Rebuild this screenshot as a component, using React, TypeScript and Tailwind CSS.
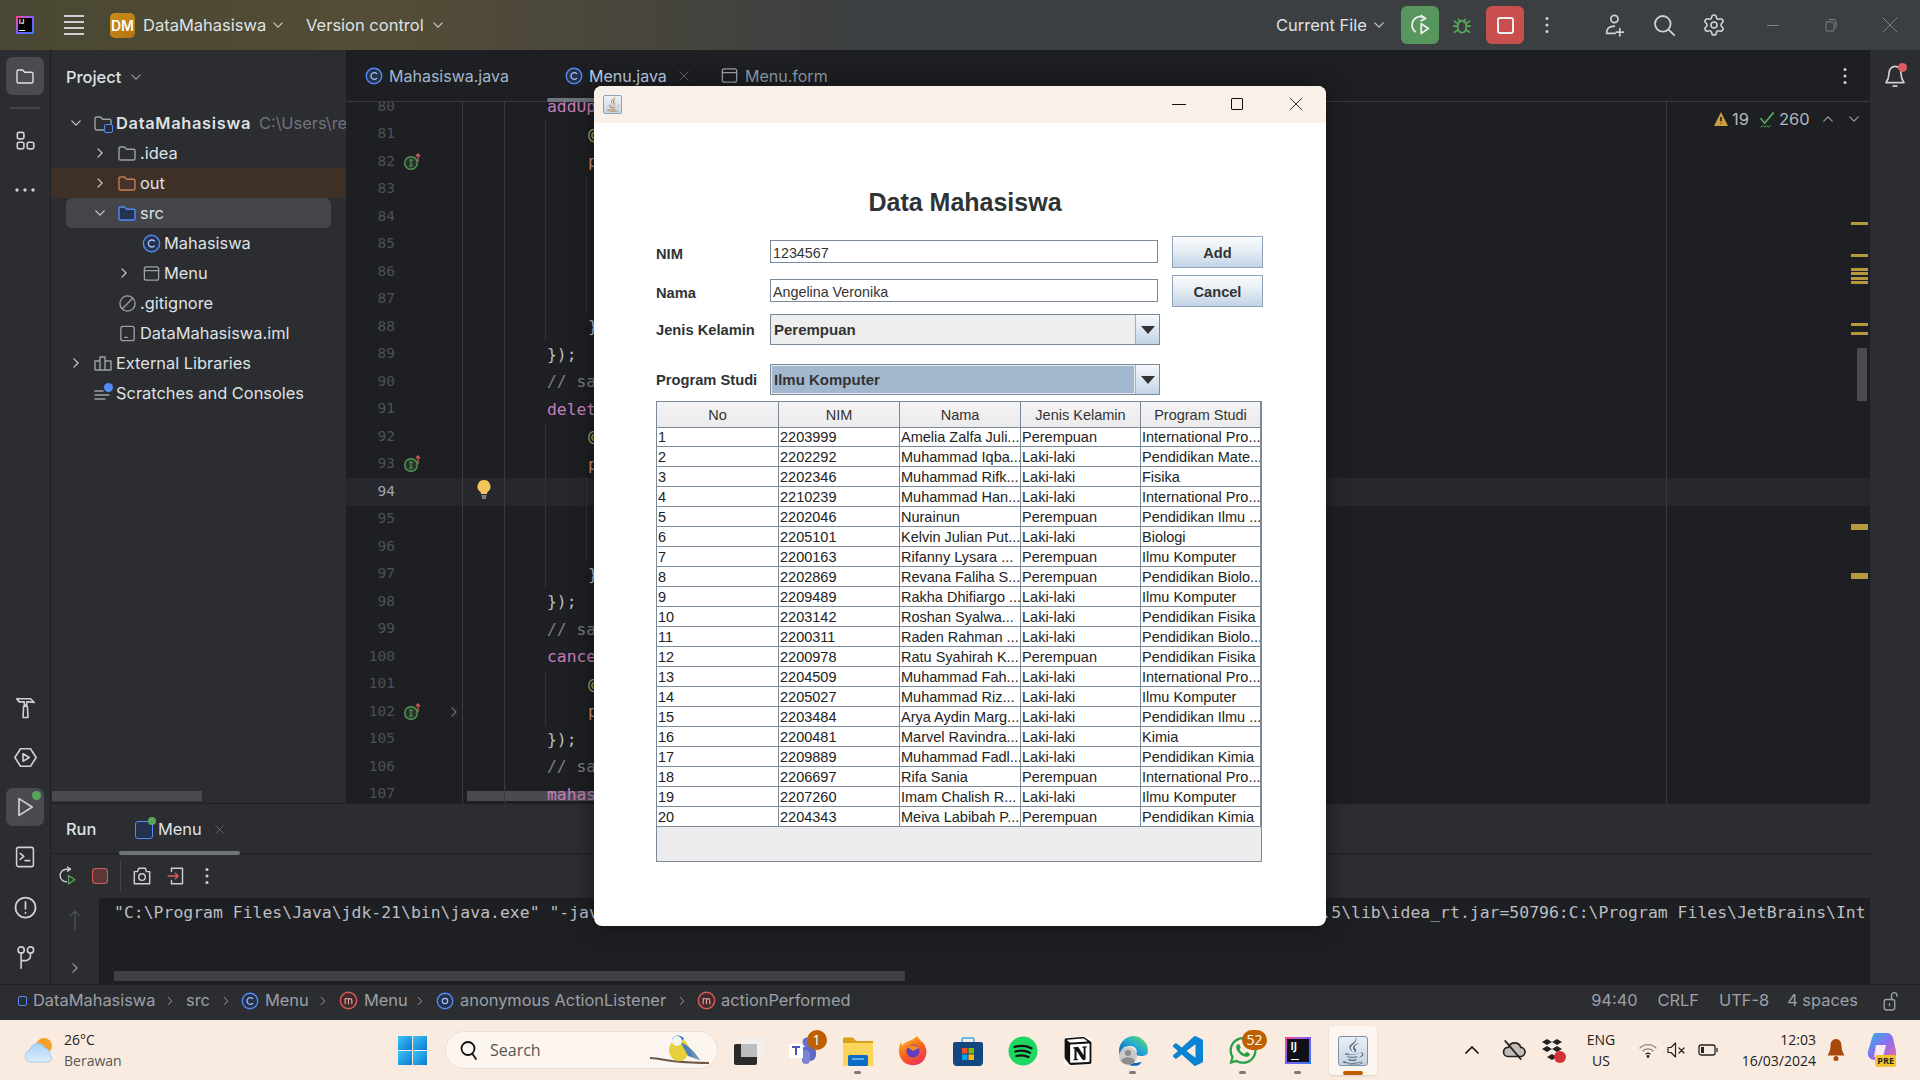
import React from 'react';
import { FaJava, FaWhatsapp } from 'react-icons/fa';
import { SiNotion } from 'react-icons/si';
import { Settings } from 'lucide-react';

const students = [
  ['1', '2203999', 'Amelia Zalfa Juli...', 'Perempuan', 'International Pro...'],
  ['2', '2202292', 'Muhammad Iqba...', 'Laki-laki', 'Pendidikan Mate...'],
  ['3', '2202346', 'Muhammad Rifk...', 'Laki-laki', 'Fisika'],
  ['4', '2210239', 'Muhammad Han...', 'Laki-laki', 'International Pro...'],
  ['5', '2202046', 'Nurainun', 'Perempuan', 'Pendidikan Ilmu ...'],
  ['6', '2205101', 'Kelvin Julian Put...', 'Laki-laki', 'Biologi'],
  ['7', '2200163', 'Rifanny Lysara ...', 'Perempuan', 'Ilmu Komputer'],
  ['8', '2202869', 'Revana Faliha S...', 'Perempuan', 'Pendidikan Biolo...'],
  ['9', '2209489', 'Rakha Dhifiargo ...', 'Laki-laki', 'Ilmu Komputer'],
  ['10', '2203142', 'Roshan Syalwa...', 'Laki-laki', 'Pendidikan Fisika'],
  ['11', '2200311', 'Raden Rahman ...', 'Laki-laki', 'Pendidikan Biolo...'],
  ['12', '2200978', 'Ratu Syahirah K...', 'Perempuan', 'Pendidikan Fisika'],
  ['13', '2204509', 'Muhammad Fah...', 'Laki-laki', 'International Pro...'],
  ['14', '2205027', 'Muhammad Riz...', 'Laki-laki', 'Ilmu Komputer'],
  ['15', '2203484', 'Arya Aydin Marg...', 'Laki-laki', 'Pendidikan Ilmu ...'],
  ['16', '2200481', 'Marvel Ravindra...', 'Laki-laki', 'Kimia'],
  ['17', '2209889', 'Muhammad Fadl...', 'Laki-laki', 'Pendidikan Kimia'],
  ['18', '2206697', 'Rifa Sania', 'Perempuan', 'International Pro...'],
  ['19', '2207260', 'Imam Chalish R...', 'Laki-laki', 'Ilmu Komputer'],
  ['20', '2204343', 'Meiva Labibah P...', 'Perempuan', 'Pendidikan Kimia'],
];

const tableColumns = ['No', 'NIM', 'Nama', 'Jenis Kelamin', 'Program Studi'];

type CodeLine = { n: string; text?: string; color?: string; indent?: number; guides?: number; impl?: boolean; fold?: boolean; bulb?: boolean; current?: boolean };

const PINK = 'text-[#c77dbb]';
const YELLOW = 'text-[#b3ae60]';
const ORANGE = 'text-[#cf8e6d]';
const PLAIN = 'text-[#bcbec4]';
const GRAY = 'text-[#7a7e85]';

const codeLines: CodeLine[] = [
  { n: '80', text: 'addUpdate', color: PINK },
  { n: '81', text: '@Override', color: YELLOW, indent: 1, guides: 1 },
  { n: '82', text: 'public', color: ORANGE, indent: 1, guides: 1, impl: true },
  { n: '83', guides: 2 },
  { n: '84', guides: 2 },
  { n: '85', guides: 2 },
  { n: '86', guides: 2 },
  { n: '87', guides: 2 },
  { n: '88', text: '}', color: PLAIN, indent: 1, guides: 1 },
  { n: '89', text: '});', color: PLAIN },
  { n: '90', text: '// save', color: GRAY },
  { n: '91', text: 'delete', color: PINK },
  { n: '92', text: '@Override', color: YELLOW, indent: 1, guides: 1 },
  { n: '93', text: 'public', color: ORANGE, indent: 1, guides: 1, impl: true },
  { n: '94', guides: 2, bulb: true, current: true },
  { n: '95', guides: 2 },
  { n: '96', guides: 2 },
  { n: '97', text: '}', color: PLAIN, indent: 1, guides: 1 },
  { n: '98', text: '});', color: PLAIN },
  { n: '99', text: '// save', color: GRAY },
  { n: '100', text: 'cancel', color: PINK },
  { n: '101', text: '@Override', color: YELLOW, indent: 1, guides: 1 },
  { n: '102', text: 'public', color: ORANGE, indent: 1, guides: 1, impl: true, fold: true },
  { n: '105', text: '});', color: PLAIN },
  { n: '106', text: '// save', color: GRAY },
  { n: '107', text: 'mahasiswa', color: PINK },
];

const Stroke: React.FC<{ size?: number; className?: string; children: React.ReactNode; sw?: number }> = ({ size = 20, className = '', children, sw = 1.4 }) => (
  <svg width={size} height={size} viewBox="0 0 20 20" fill="none" stroke="currentColor" strokeWidth={sw} strokeLinecap="round" strokeLinejoin="round" className={`shrink-0 ${className}`}>
    {children}
  </svg>
);

const ChevronDown = ({ className = 'text-[#9da0a8]', size = 14 }: { className?: string; size?: number }) => (
  <Stroke size={size} className={className} sw={1.6}><path d="M4 7l6 6 6-6" /></Stroke>
);
const ChevronRight = ({ className = 'text-[#9da0a8]', size = 14 }: { className?: string; size?: number }) => (
  <Stroke size={size} className={className} sw={1.6}><path d="M7 4l6 6-6 6" /></Stroke>
);
const Kebab = ({ className = 'text-[#ced0d6]' }: { className?: string }) => (
  <svg width="20" height="20" viewBox="0 0 20 20" className={`shrink-0 ${className}`} fill="currentColor">
    <circle cx="10" cy="3.5" r="1.5" /><circle cx="10" cy="10" r="1.5" /><circle cx="10" cy="16.5" r="1.5" />
  </svg>
);

const FolderIcon = ({ className = 'text-[#9da0a8]', fill = 'none' }: { className?: string; fill?: string }) => (
  <Stroke size={20} className={className}><path d="M2 5.5A1.5 1.5 0 0 1 3.5 4h4l2.2 2.3h6.8A1.5 1.5 0 0 1 18 7.8v7.7a1.5 1.5 0 0 1-1.5 1.5h-13A1.5 1.5 0 0 1 2 15.5z" fill={fill} /></Stroke>
);

const ClassIcon = ({ size = 19, dot = false }: { size?: number; dot?: boolean }) => (
  <svg width={size} height={size} viewBox="0 0 20 20" fill="none" className="shrink-0">
    <circle cx="10" cy="10" r="8.6" stroke="#548af7" strokeWidth="1.5" fill="#25324d" />
    {dot ? <circle cx="10" cy="10" r="3" stroke="#a8c1f5" strokeWidth="1.3" /> : <path d="M13 7.4A3.7 3.7 0 1 0 13 12.6" stroke="#a8c1f5" strokeWidth="1.4" strokeLinecap="round" />}
  </svg>
);

const MethodIcon = () => (
  <svg width="19" height="19" viewBox="0 0 20 20" fill="none" className="shrink-0">
    <circle cx="10" cy="10" r="8.6" stroke="#db5c5c" strokeWidth="1.5" fill="#3f2a2d" />
    <path d="M6.5 13.5V8M6.5 9c1-1.5 3.4-1.5 3.5.5v4M10 9.5c.3-2 3.5-2 3.5.5v3.5" stroke="#e6a5a5" strokeWidth="1.2" strokeLinecap="round" />
  </svg>
);

const FormIcon = () => (
  <Stroke size={19} className="text-[#9da0a8]"><rect x="2.5" y="3" width="15" height="14" rx="2" /><path d="M2.5 7h15" /></Stroke>
);

const ImplIcon = () => (
  <svg width="20" height="20" viewBox="0 0 20 20" fill="none" className="shrink-0">
    <circle cx="8" cy="11" r="6.3" stroke="#57965c" strokeWidth="1.4" fill="#253627" />
    <path d="M6 8h4M6 14h4M8 8v6" stroke="#57965c" strokeWidth="1.2" />
    <path d="M15 10V2M12.8 4.4L15 2l2.2 2.4" stroke="#db5c5c" strokeWidth="1.2" />
  </svg>
);

const IdeaLogo = () => (
  <div className="w-[18px] h-[18px] shrink-0 p-[2px] bg-gradient-to-br from-[#ff318c] via-[#7c59ff] to-[#087cfa]">
    <div className="w-full h-full bg-black flex flex-col justify-between px-[1px] pt-[1px] pb-[1px] text-white text-[6px] font-bold leading-none">
      <span>IJ</span>
      <span className="block w-[6px] h-[1px] bg-white" />
    </div>
  </div>
);

const TitleBar = () => (
  <div className="h-[50px] shrink-0 flex items-center text-[#dfe1e5] text-[16.5px] bg-gradient-to-r from-[#494733] via-[#544c36] via-20% to-[#3c3f41] to-45%">
    <div className="ml-[16px]"><IdeaLogo /></div>
    <div className="ml-[30px] w-[20px] flex flex-col gap-[4px]">
      <span className="h-[2px] bg-[#ced0d6]" /><span className="h-[2px] bg-[#ced0d6]" /><span className="h-[2px] bg-[#ced0d6]" /><span className="h-[2px] bg-[#ced0d6]" />
    </div>
    <div className="ml-[26px] w-[25px] h-[25px] rounded-[5px] bg-gradient-to-br from-[#c98f1c] to-[#b5740f] text-white text-[14px] font-semibold flex items-center justify-center">DM</div>
    <span className="ml-[8px] w-[128px] whitespace-nowrap">DataMahasiswa</span>
    <ChevronDown className="text-[#ced0d6]" />
    <span className="ml-[21px] w-[125px] whitespace-nowrap">Version control</span>
    <ChevronDown className="text-[#ced0d6]" />
    <div className="ml-auto flex items-center">
      <span className="w-[96px] whitespace-nowrap">Current File</span>
      <ChevronDown className="text-[#ced0d6]" />
      <div className="ml-[15px] w-[38px] h-[38px] rounded-[6px] bg-[#57965c] flex items-center justify-center text-[#eeeeee]">
        <Stroke size={24} sw={1.5}>
          <path d="M14.5 4.5A6.5 6.5 0 1 0 6 15.5" /><path d="M11 2l3.5 2.5L11 6.5" /><path d="M11 9v8l6-4z" />
        </Stroke>
      </div>
      <div className="ml-[11px] w-[24px] flex justify-center text-[#57a65c]">
        <Stroke size={22} sw={1.6}>
          <ellipse cx="10" cy="11.5" rx="4" ry="5.5" /><path d="M7 5l1.5 2M13 5l-1.5 2M2.5 11h3.5M14 11h3.5M3 6.5l3.5 2.5M17 6.5L13.500 9M3 16.500l3.500-2M17 16.500l-3.500-2" />
        </Stroke>
      </div>
      <div className="ml-[12px] w-[38px] h-[38px] rounded-[6px] bg-[#c94f4f] flex items-center justify-center">
        <span className="block w-[17px] h-[17px] rounded-[3px] border-2 border-[#eeeeee]" />
      </div>
      <div className="ml-[13px]"><Kebab /></div>
      <div className="ml-[46px] w-[24px] text-[#ced0d6]">
        <Stroke size={24} sw={1.4}><circle cx="9.500" cy="5" r="3" /><path d="M3 17c0-4 2-6 6.500-6M14 13v6M11 16h6M3 17h7" /></Stroke>
      </div>
      <div className="ml-[25px] w-[24px] text-[#ced0d6]">
        <Stroke size={24} sw={1.5}><circle cx="9" cy="9" r="6.500" /><path d="M14 14l4.500 4.500" /></Stroke>
      </div>
      <div className="ml-[26px] w-[24px] text-[#ced0d6]"><Settings size={24} strokeWidth={1.6} /></div>
      <div className="ml-[37px] w-[20px] flex justify-center"><span className="block w-[12px] h-[1px] bg-[#7f8286]" /></div>
      <div className="ml-[38px] w-[20px] text-[#7f8286]">
        <Stroke size={20} sw={1}><rect x="5" y="7" width="8" height="9" rx="1" /><path d="M8 4.500h5a2 2 0 0 1 2 2V13" /></Stroke>
      </div>
      <div className="ml-[39px] mr-[20px] w-[20px] text-[#7f8286]">
        <Stroke size={20} sw={1}><path d="M3 3l14 14M17 3L3 17" /></Stroke>
      </div>
    </div>
  </div>
);

const StripeButton: React.FC<{ active?: boolean; children: React.ReactNode }> = ({ active, children }) => (
  <div className={`relative w-[38px] h-[38px] rounded-[7px] flex items-center justify-center text-[#ced0d6] ${active ? 'bg-[#494b50]' : ''}`}>{children}</div>
);

const LeftStripe = () => (
  <div className="w-[51px] shrink-0 bg-[#2b2d30] border-r border-[#1e1f22] flex flex-col items-center justify-between pt-[7px] pb-[8px]">
    <div className="flex flex-col items-center">
      <StripeButton active><FolderIcon className="text-[#dfe1e5]" /></StripeButton>
      <span className="block w-[30px] h-[2px] bg-[#43454a] mt-[12px] mb-[12px]" />
      <StripeButton>
        <Stroke size={22} sw={1.5}><rect x="3" y="3" width="6" height="6" rx="1.500" /><rect x="3" y="12" width="6" height="6" rx="1.500" /><rect x="12" y="12" width="6" height="6" rx="1.500" /></Stroke>
      </StripeButton>
      <div className="mt-[12px]"><StripeButton>
        <svg width="22" height="6" viewBox="0 0 22 6" fill="currentColor"><circle cx="3" cy="3" r="1.700" /><circle cx="11" cy="3" r="1.700" /><circle cx="19" cy="3" r="1.700" /></svg>
      </StripeButton></div>
    </div>
    <div className="flex flex-col items-center gap-[12px]">
      <StripeButton><Stroke size={25} sw={1.3}><path d="M3 3h11l3 3-4-.5H11v2.500H9V5.500H5zM8.500 9h3l.5 9H8z" /></Stroke></StripeButton>
      <StripeButton><Stroke size={25} sw={1.3}><path d="M6 3h8l4.500 7-4.500 7H6l-4.500-7z" /><path d="M8 7v6l5-3z" /></Stroke></StripeButton>
      <StripeButton active>
        <Stroke size={24} sw={1.4}><path d="M5 3v14l11-7z" /></Stroke>
        <span className="absolute top-[3px] right-[3px] w-[9px] h-[9px] rounded-full bg-[#57a65c]" />
      </StripeButton>
      <StripeButton><Stroke size={24} sw={1.300}><rect x="3" y="2" width="14" height="16" rx="1.500" /><path d="M6 7l3 2.500L6 12M10 13h4" /></Stroke></StripeButton>
      <StripeButton><Stroke size={25} sw={1.400}><circle cx="10" cy="10" r="8" /><path d="M10 5.500v5.500M10 14v.4" /></Stroke></StripeButton>
      <StripeButton><Stroke size={25} sw={1.300}><circle cx="6.500" cy="4" r="2.500" /><circle cx="14" cy="4" r="2.500" /><path d="M6.500 6.500v12M14 6.500v2a4 4 0 0 1-4 4H6.500" /></Stroke></StripeButton>
    </div>
  </div>
);

const padByLevel = ['pl-[18px]', 'pl-[42px]', 'pl-[66px]'];

const TreeRow: React.FC<{ level: number; chevron?: 'right' | 'down'; icon: React.ReactNode; label: string; hint?: string; bold?: boolean; className?: string }> = ({ level, chevron, icon, label, hint, bold, className }) => (
  <div className={`h-[30px] flex items-center text-[16.4px] text-[#dfe1e5] whitespace-nowrap overflow-hidden ${className ?? padByLevel[level]}`}>
    <span className="w-[14px] shrink-0">
      {chevron === 'right' && <ChevronRight className="text-[#ced0d6]" />}
      {chevron === 'down' && <ChevronDown className="text-[#ced0d6]" />}
    </span>
    <span className="ml-[10px] w-[20px] shrink-0 flex justify-center">{icon}</span>
    <span className={`ml-[3px] ${bold ? 'font-semibold tracking-[0.7px]' : ''}`}>{label}</span>
    {hint && <span className="ml-[8px] text-[#6f737a]">{hint}</span>}
  </div>
);

const ProjectPanel = () => (
  <div className="w-[295px] shrink-0 bg-[#2b2d30] flex flex-col">
    <div className="h-[54px] shrink-0 flex items-center gap-[8px] pl-[15px] text-[16.4px] font-medium text-[#dfe1e5]">
      Project <ChevronDown />
    </div>
    <div className="mt-[4px] flex-1">
      <TreeRow level={0} chevron="down" bold label="DataMahasiswa" hint="C:\Users\reza\IdeaProjects" icon={
        <span className="relative block w-[20px] h-[20px]">
          <FolderIcon className="text-[#9da0a8]" />
          <span className="absolute right-0 bottom-0 w-[9px] h-[9px] rounded-[2px] border-[1.500px] border-[#548af7] bg-[#2b2d30]" />
        </span>
      } />
      <TreeRow level={1} chevron="right" label=".idea" icon={<FolderIcon />} />
      <TreeRow level={1} chevron="right" label="out" className="pl-[42px] bg-[#3f3027]" icon={<FolderIcon className="text-[#c77d55]" fill="#45322b" />} />
      <TreeRow level={1} chevron="down" label="src" className="ml-[15px] mr-[15px] pl-[27px] rounded-md bg-[#43454a]" icon={<FolderIcon className="text-[#548af7]" fill="#25324d" />} />
      <TreeRow level={2} label="Mahasiswa" icon={<ClassIcon />} />
      <TreeRow level={2} chevron="right" label="Menu" icon={<FormIcon />} />
      <TreeRow level={1} label=".gitignore" icon={<Stroke size={19} className="text-[#9da0a8]"><circle cx="10" cy="10" r="8" /><path d="M4.500 15.500l11-11" /></Stroke>} />
      <TreeRow level={1} label="DataMahasiswa.iml" icon={<Stroke size={19} className="text-[#9da0a8]"><rect x="3" y="2.500" width="14" height="15" rx="2" /><path d="M7 14h3" /></Stroke>} />
      <TreeRow level={0} chevron="right" label="External Libraries" icon={<Stroke size={20} className="text-[#9da0a8]"><path d="M2 17V8h5v9zM7 17V4h5v13zM12 17V8h6v9z" /></Stroke>} />
      <TreeRow level={0} label="Scratches and Consoles" icon={
        <span className="relative block w-[20px] h-[20px]">
          <Stroke size={20} className="text-[#9da0a8]"><path d="M2 8h8M2 12h14M2 16h10" /></Stroke>
          <span className="absolute right-0 top-0 w-[9px] h-[9px] rounded-full bg-[#548af7]" />
        </span>
      } />
    </div>
    <div className="ml-[1px] mb-[2px] w-[150px] h-[10px] shrink-0 bg-[#4a4b4e]" />
  </div>
);

const CodeRow: React.FC<{ line: CodeLine }> = ({ line }) => {
  const { n, text, color, indent = 0, guides = 0, impl, fold, bulb, current } = line;
  return (
    <div className={`h-[27.5px] shrink-0 flex items-stretch font-['DejaVu_Sans_Mono',monospace] ${current ? 'bg-[#26282e]' : ''}`}>
      <div className="w-[117px] shrink-0 flex items-center border-r border-[#393b40]">
        <span className={`w-[49px] text-right text-[14.5px] ${current ? 'text-[#a1a3ab]' : 'text-[#4b5059]'}`}>{n}</span>
        <span className="ml-[8px] w-[20px]">{impl && <ImplIcon />}</span>
        <span className="ml-[24px] w-[14px]">{fold && <ChevronRight className="text-[#6f737a]" />}</span>
      </div>
      <div className="w-[42px] shrink-0 flex items-center justify-center border-r border-[#393b40]">
        {bulb && (
          <svg width="16" height="22" viewBox="0 0 16 22" className="-mt-[3px]">
            <path d="M8 1a6.500 6.500 0 0 0-4 11.600c.8.700 1 1.500 1 2.400h6c0-.9.200-1.700 1-2.400A6.500 6.500 0 0 0 8 1z" fill="#f2c55c" />
            <path d="M5.500 17h5M6 19h4" stroke="#ced0d6" strokeWidth="1.200" />
          </svg>
        )}
      </div>
      <div className="w-[1162px] shrink-0 flex border-r border-[#393b40] text-[16.35px] leading-[27.5px] whitespace-nowrap">
        <span className="w-[40px] shrink-0" />
        <div className={`w-[41px] shrink-0 pl-[1px] border-l ${guides > 0 ? 'border-[#313438]' : 'border-transparent'} ${color ?? ''}`}>{indent === 0 && text}</div>
        <div className={`w-[41px] shrink-0 pl-[1px] border-l ${guides > 1 ? 'border-[#313438]' : 'border-transparent'} ${color ?? ''}`}>{indent === 1 && text}</div>
      </div>
    </div>
  );
};

const scrollMarks = ['top-[120px] h-[3px]', 'top-[152px] h-[3px]', 'top-[166px] h-[3px]', 'top-[170px] h-[3px]', 'top-[175px] h-[3px]', 'top-[179px] h-[3px]', 'top-[221px] h-[3px]', 'top-[230px] h-[3px]', 'top-[422px] h-[6px]', 'top-[471px] h-[6px]'];

const Editor = () => (
  <div className="relative flex-1 min-w-0 bg-[#1e1f22] flex flex-col overflow-hidden">
    <div className="relative h-[52px] shrink-0 border-b border-[#393b40] flex items-center pl-[19px] text-[16px] z-10 bg-[#1e1f22]">
      <ClassIcon size={18} />
      <span className="ml-[6px] w-[176px] text-[#a0b6cc] whitespace-nowrap">Mahasiswa.java</span>
      <ClassIcon size={18} />
      <span className="ml-[6px] w-[89px] text-[#bcd4ea] whitespace-nowrap">Menu.java</span>
      <Stroke size={12} className="text-[#6f737a]"><path d="M3 3l14 14M17 3L3 17" /></Stroke>
      <span className="ml-[30px]"><FormIcon /></span>
      <span className="ml-[6px] text-[#8fa0ae] whitespace-nowrap">Menu.form</span>
      <span className="ml-auto mr-[15px]"><Kebab /></span>
      <span className="absolute left-[201px] -bottom-[1px] w-[150px] h-[4px] rounded-full bg-[#6f737a]" />
    </div>
    <div className="relative flex-1 min-h-0 overflow-hidden">
      <div className="absolute left-[121px] bottom-[2px] w-[300px] h-[10px] bg-[#4a4b4e]" />
      <div className="relative flex flex-col -mt-[9px]">
        {codeLines.map(line => <CodeRow key={line.n} line={line} />)}
      </div>
      <div className="absolute left-[1367px] top-[5px] w-[155px] flex items-center text-[16.5px] text-[#b4b8bf]">
        <svg width="16" height="16" viewBox="0 0 16 16"><path d="M8 1l7 14H1z" fill="#cb9d3c" /><path d="M8 6v4.500M8 12.200v.6" stroke="#1e1f22" strokeWidth="1.600" /></svg>
        <span className="ml-[3px] w-[24px]">19</span>
        <span className="ml-[2px] w-[21px] text-[#57a65c]"><Stroke size={19} sw={1.800}><path d="M3 9l4 5 9-11" /><path d="M3 18l2-1.500 2 1.500 2-1.500 2 1.500 2-1.500" strokeWidth="1" /></Stroke></span>
        <span className="w-[34px]">260</span>
        <span className="ml-[8px] rotate-180"><ChevronDown /></span>
        <span className="ml-[12px]"><ChevronDown /></span>
      </div>
      {scrollMarks.map(mark => <span key={mark} className={`absolute left-[1505px] w-[17px] bg-[#b8983f] ${mark}`} />)}
      <span className="absolute left-[1511px] top-[246px] w-[10px] h-[53px] bg-[#4a4b4e]" />
    </div>
  </div>
);

const RunPanel = () => (
  <div className="h-[181px] shrink-0 bg-[#2b2d30] border-t border-[#1e1f22] flex flex-col">
    <div className="relative h-[50px] shrink-0 border-b border-[#1e1f22] flex items-center pt-[2px] text-[16.4px] text-[#dfe1e5]">
      <span className="ml-[15px] w-[69px] font-medium">Run</span>
      <span className="relative w-[18px] h-[18px] rounded-[3px] border-[1.500px] border-[#548af7] bg-[#25324d]">
        <span className="absolute -top-[5px] -right-[4px] w-[8px] h-[8px] rounded-full bg-[#57a65c]" />
      </span>
      <span className="ml-[5px] w-[56px]">Menu</span>
      <Stroke size={11} className="text-[#6f737a]"><path d="M3 3l14 14M17 3L3 17" /></Stroke>
      <span className="absolute left-[68px] -bottom-[2px] w-[121px] h-[4px] rounded-full bg-[#6f737a]" />
    </div>
    <div className="h-[44px] shrink-0 flex items-center pl-[6px] pb-[1px] text-[#ced0d6]">
      <Stroke size={21} sw={1.300}><path d="M9 16A6 6 0 0 1 9 4h3" /><path d="M10 2l3 2-3 2" /><path d="M11 10v8l6-4z" stroke="#57a65c" /></Stroke>
      <span className="ml-[14px] w-[16px] h-[16px] rounded-[3px] border border-[#db5c5c] bg-[#5e3838]" />
      <span className="ml-[12px] w-[1px] h-[30px] bg-[#43454a]" />
      <span className="ml-[10px]"><Stroke size={22} sw={1.300}><path d="M3 6h3l1-3h6l1 3h3v11H3z" /><circle cx="10" cy="11" r="3" /></Stroke></span>
      <span className="ml-[13px]"><Stroke size={22} sw={1.300}><path d="M5 6V3h10v14H5v-3" /><path d="M2 10h9M8.500 7.500L11 10l-2.500 2.500" stroke="#db5c5c" /></Stroke></span>
      <span className="ml-[9px]"><Kebab /></span>
    </div>
    <div className="flex-1 min-h-0 flex">
      <div className="w-[48px] shrink-0 flex flex-col items-center justify-between pt-[11px] pb-[9px] text-[#4e5157]">
        <Stroke size={22} sw={1.200}><path d="M10 19V2M5.500 6.500L10 2l4.500 4.500" /></Stroke>
        <ChevronRight className="text-[#9da0a8]" size={14} />
      </div>
      <div className="flex-1 min-w-0 bg-[#1e1f22] pl-[15px] flex flex-col overflow-hidden">
        <div className="mt-[1px] h-[27px] leading-[27px] text-[16.44px] text-[#bcbec4] whitespace-pre overflow-hidden font-['DejaVu_Sans_Mono',monospace]">
          {'"C:\\Program Files\\Java\\jdk-21\\bin\\java.exe" "-javaagent:C:\\Program Files\\JetBrains\\IntelliJ IDEA Community Edition  2023.3.5\\lib\\idea_rt.jar=50796:C:\\Program Files\\JetBrains\\Int'}
        </div>
        <div className="mt-auto mb-[3px] w-[791px] h-[10px] shrink-0 bg-[#3f4042]" />
      </div>
    </div>
  </div>
);

const StatusBar = () => (
  <div className="h-[36px] shrink-0 bg-[#2b2d30] border-t border-[#1e1f22] flex items-center pb-[4px] text-[16.4px] text-[#9da0a8] whitespace-nowrap">
    <span className="ml-[18px] w-[9px] h-[10px] rounded-[2px] border-[1.500px] border-[#548af7]" />
    <span className="ml-[6px] w-[131px]">DataMahasiswa</span>
    <ChevronRight size={12} />
    <span className="ml-[10px] w-[34px]">src</span>
    <ChevronRight size={12} />
    <span className="ml-[9px]"><ClassIcon size={18} /></span>
    <span className="ml-[6px] w-[52px]">Menu</span>
    <ChevronRight size={12} />
    <span className="ml-[10px]"><MethodIcon /></span>
    <span className="ml-[6px] w-[50px]">Menu</span>
    <ChevronRight size={12} />
    <span className="ml-[10px]"><ClassIcon size={18} dot /></span>
    <span className="ml-[6px] w-[216px]">anonymous ActionListener</span>
    <ChevronRight size={12} />
    <span className="ml-[9px]"><MethodIcon /></span>
    <span className="ml-[5px]">actionPerformed</span>
    <span className="ml-auto">94:40</span>
    <span className="ml-[20px]">CRLF</span>
    <span className="ml-[20px]">UTF-8</span>
    <span className="ml-[18px]">4 spaces</span>
    <span className="ml-[22px] mr-[19px]">
      <Stroke size={21} sw={1.300}><rect x="4" y="9" width="10" height="10" rx="2" /><path d="M11 9V5a2.500 2.500 0 0 1 5 0v1M9 13v2" /></Stroke>
    </span>
  </div>
);

const WeatherIcon = () => (
  <svg width="32" height="30" viewBox="0 0 32 30">
    <defs><linearGradient id="cloudFill" x1="0" y1="0" x2="0" y2="1"><stop offset="0" stopColor="#a7d2f7" /><stop offset="1" stopColor="#dfeefb" /></linearGradient></defs>
    <circle cx="20" cy="11" r="8" fill="#f7a12a" />
    <path d="M7 27a6 6 0 0 1-1-11.900A8 8 0 0 1 21 13a6 6 0 0 1 5 7 4 4 0 0 1-1 7z" fill="url(#cloudFill)" stroke="#8fc2ef" strokeWidth="0.800" />
  </svg>
);

const TaskIcons: Record<string, React.ReactNode> = {
  taskView: (
    <svg width="30" height="30" viewBox="0 0 30 30">
      <rect x="8" y="1" width="22" height="20" rx="2" fill="#f2f0ee" />
      <rect x="1" y="8" width="23" height="21" rx="2" fill="#2a2a2a" />
      <rect x="8" y="8" width="16" height="13" fill="#bdbdbd" />
    </svg>
  ),
  teams: (
    <svg width="30" height="30" viewBox="0 0 30 30">
      <circle cx="19" cy="6" r="4.500" fill="#6670c9" /><rect x="13" y="10" width="15" height="15" rx="6" fill="#5f69c4" />
      <rect x="14" y="14" width="8" height="14" rx="4" fill="#7b83d6" />
      <rect x="1" y="8" width="14" height="14" fill="#ffffff" /><path d="M4 11h8M8 11v8" stroke="#4b53bc" strokeWidth="2" />
    </svg>
  ),
  files: (
    <svg width="30" height="30" viewBox="0 0 30 30">
      <path d="M0 3a1.500 1.500 0 0 1 1.500-1.500H10L13 5H30v25H0z" fill="#d99f16" />
      <path d="M0 7h30v23H0z" fill="#fcd45c" />
      <rect x="5" y="19" width="20" height="11" rx="1.500" fill="#0d6cc4" /><path d="M9 23h12" stroke="#7cc0f2" strokeWidth="1.500" />
    </svg>
  ),
  firefox: (
    <svg width="30" height="30" viewBox="0 0 30 30">
      <defs><linearGradient id="foxFill" x1="0.200" y1="0" x2="0.800" y2="1"><stop offset="0" stopColor="#fdbb1b" /><stop offset="0.500" stopColor="#f6631f" /><stop offset="1" stopColor="#ec2f5d" /></linearGradient></defs>
      <path d="M19 0c1 3 5 5 7 8 4 6 3 14-2 18-6 5-16 4-20-2C0 19 0 11 3 6l1 4c2-3 4-4 7-5 3-1 6-3 8-5z" fill="url(#foxFill)" />
      <circle cx="15" cy="15" r="6.500" fill="#5f3fbf" /><path d="M9 11c3-2 8-3 12 1l-6 3z" fill="#f68a1f" />
    </svg>
  ),
  store: (
    <svg width="30" height="30" viewBox="0 0 30 30">
      <path d="M9 7V3.500A1.500 1.500 0 0 1 10.500 2h9A1.500 1.500 0 0 1 21 3.500V7" fill="none" stroke="#37a8e8" strokeWidth="1.500" />
      <path d="M0 8a2 2 0 0 1 2-2h26a2 2 0 0 1 2 2v18a4 4 0 0 1-4 4H4a4 4 0 0 1-4-4z" fill="#14477f" />
      <rect x="9" y="12" width="5.500" height="5.500" fill="#f25022" /><rect x="15.500" y="12" width="5.500" height="5.500" fill="#7fba00" />
      <rect x="9" y="18.500" width="5.500" height="5.500" fill="#00a4ef" /><rect x="15.500" y="18.500" width="5.500" height="5.500" fill="#ffb900" />
    </svg>
  ),
  spotify: (
    <svg width="30" height="30" viewBox="0 0 30 30">
      <circle cx="15" cy="15" r="14.500" fill="#1ed760" />
      <path d="M6.500 11c6-1.800 12-1.300 17 1.200M7.500 15.500c5-1.400 10-1 14.500 1.200M8.500 20c4.200-1.100 8.500-.8 12 1" fill="none" stroke="#141414" strokeWidth="2.300" strokeLinecap="round" />
    </svg>
  ),
  notion: <span className="block w-[28px] h-[28px] rounded-[4px] bg-white"><SiNotion size={28} color="#111111" /></span>,
  edge: (
    <svg width="30" height="30" viewBox="0 0 30 30">
      <defs><linearGradient id="edgeFill" x1="0.900" y1="0.100" x2="0.100" y2="0.900"><stop offset="0" stopColor="#54d96f" /><stop offset="0.500" stopColor="#22a7d8" /><stop offset="1" stopColor="#0c5fa8" /></linearGradient></defs>
      <path d="M15 0a15 15 0 0 1 15 15c0 4-3 5-7 5-3 0-5-1-5-2 2-3 0-8-6-8-5 0-9 3-11 5A15 15 0 0 1 15 0z" fill="url(#edgeFill)" />
      <path d="M1 15a15 15 0 0 0 20 14l3-3-6 1C10 27 6 20 9 12 5 12 2 13 1 15z" fill="#0c65b8" />
      <circle cx="10" cy="20" r="9" fill="#c9c9c9" /><circle cx="10" cy="17" r="3" fill="#8c8c8c" /><path d="M3 25c2-5 12-5 14 0a9 9 0 0 1-14 0z" fill="#8c8c8c" />
    </svg>
  ),
  vscode: (
    <svg width="30" height="30" viewBox="0 0 24 24"><path fill="#0a84d0" d="M23.150 2.587L18.210.210a1.494 1.494 0 0 0-1.705.290l-9.460 8.630-4.120-3.128a.999.999 0 0 0-1.276.057L.327 7.261A1 1 0 0 0 .326 8.740L3.899 12 .326 15.260a1 1 0 0 0 .001 1.479L1.650 17.940a.999.999 0 0 0 1.276.057l4.120-3.128 9.460 8.630a1.492 1.492 0 0 0 1.704.290l4.942-2.377A1.500 1.500 0 0 0 24 20.060V3.939a1.500 1.500 0 0 0-.850-1.352zm-5.146 14.861L10.826 12l7.178-5.448v10.896z" /></svg>
  ),
  whatsapp: <FaWhatsapp size={31} color="#27a047" />,
  idea: (
    <div className="w-[26px] h-[27px] p-[2px] bg-gradient-to-br from-[#ff318c] via-[#7c59ff] to-[#087cfa]">
      <div className="w-full h-full bg-[#10101a] flex flex-col justify-between pl-[4px] py-[2px] text-white text-[10px] font-bold leading-none">
        <span>IJ</span>
        <span className="block w-[8px] h-[1.500px] bg-white" />
      </div>
    </div>
  ),
  java: (
    <span className="block w-[30px] h-[30px] rounded-[3px] border border-[#7c90a8] bg-gradient-to-b from-[#e9eff6] to-[#c6d3e2] flex items-center justify-center">
      <FaJava size={28} color="#50657c" />
    </span>
  ),
};

const TaskSlot: React.FC<{ icon: string; badge?: string; running?: boolean; active?: boolean }> = ({ icon, badge, running, active }) => (
  <div className="w-[55px] h-[60px] shrink-0 flex items-center justify-center">
    <div className={`w-[48px] h-[49px] rounded-[4px] flex flex-col items-center pt-[10px] ${active ? 'bg-[#fdf6f0] shadow-sm' : ''}`}>
      <div className="relative w-[30px] h-[30px] flex items-center justify-center">
        {TaskIcons[icon]}
        {badge && <span className="absolute -top-[6px] -right-[9px] min-w-[20px] h-[20px] px-[4px] rounded-full bg-[#bf6000] text-white text-[14px] flex items-center justify-center font-['Open_Sans',sans-serif]">{badge}</span>}
      </div>
      {running && <span className="mt-[5px] w-[7px] h-[3px] rounded-full bg-[#7d7a78]" />}
      {active && <span className="mt-[5px] w-[20px] h-[4px] rounded-full bg-[#c25e00]" />}
    </div>
  </div>
);

const BirdIcon = () => (
  <svg width="60" height="38" viewBox="0 0 60 38">
    <path d="M0 27c8 0 14 2 22 3 10 1 24 2 37 2" stroke="#6d5a4a" strokeWidth="2" fill="none" />
    <ellipse cx="29" cy="19" rx="10" ry="11" fill="#e6cf3a" />
    <path d="M22 8a7 7 0 0 1 12 0l-4 3z" fill="#2c74bf" />
    <circle cx="27" cy="10" r="5" fill="#f3f3f0" />
    <path d="M31 12c6 1 12 7 19 17l-12-4z" fill="#4a83b8" />
    <path d="M40 18l10 11-6-2z" fill="#7a96a8" />
  </svg>
);

const Taskbar = () => (
  <div className="h-[60px] shrink-0 bg-[#f9ebe0] flex items-center font-['Open_Sans',sans-serif] text-[#222222]">
    <div className="ml-[24px]"><WeatherIcon /></div>
    <div className="ml-[8px] w-[334px] flex flex-col text-[14px] leading-[21px]">
      <span>26°C</span>
      <span className="text-[#555555]">Berawan</span>
    </div>
    <svg width="29" height="29" viewBox="0 0 29 29">
      <defs><linearGradient id="winFill" x1="0" y1="0" x2="1" y2="1"><stop offset="0" stopColor="#3cc5f5" /><stop offset="1" stopColor="#0b78d1" /></linearGradient></defs>
      <rect width="14" height="14" fill="url(#winFill)" /><rect x="15" width="14" height="14" fill="url(#winFill)" /><rect y="15" width="14" height="14" fill="url(#winFill)" /><rect x="15" y="15" width="14" height="14" fill="url(#winFill)" />
    </svg>
    <div className="ml-[18px] w-[273px] h-[38px] rounded-full bg-[#fdf5ef] border border-[#eadfd6] flex items-center pl-[13px] text-[16px] text-[#555555] overflow-hidden">
      <Stroke size={20} className="text-[#111111]" sw={1.800}><circle cx="9" cy="8.500" r="6.500" /><path d="M13.500 14l3.500 5" /></Stroke>
      <span className="ml-[11px]">Search</span>
      <span className="ml-auto mr-[7px]"><BirdIcon /></span>
    </div>
    <div className="ml-[2px] flex">
      <TaskSlot icon="taskView" />
      <TaskSlot icon="teams" badge="1" />
      <TaskSlot icon="files" running />
      <TaskSlot icon="firefox" />
      <TaskSlot icon="store" />
      <TaskSlot icon="spotify" />
      <TaskSlot icon="notion" />
      <TaskSlot icon="edge" running />
      <TaskSlot icon="vscode" />
      <TaskSlot icon="whatsapp" badge="52" running />
      <TaskSlot icon="idea" running />
      <TaskSlot icon="java" active />
    </div>
    <div className="ml-auto flex items-center">
      <span className="w-[20px] text-[#111111]"><Stroke size={20} sw={1.700}><path d="M4 13l6-6 6 6" /></Stroke></span>
      <span className="ml-[18px] w-[26px] text-[#222222]"><Stroke size={26} sw={1.300}><path d="M6 15a3.500 3.500 0 0 1 .5-7 5 5 0 0 1 9.500 0 3.500 3.500 0 0 1-.5 7z" fill="#c4bcb6" /><path d="M4 3l12 14" /></Stroke></span>
      <span className="relative ml-[14px] w-[26px] h-[26px]">
        <svg width="26" height="26" viewBox="0 0 26 26" fill="#222222"><path d="M7 2l5 3-5 3-5-3zM17 2l5 3-5 3-5-3zM7 9l5 3-5 3-5-3zM17 9l5 3-5 3-5-3zM12 17l5 3-5 3-5-3z" /></svg>
        <span className="absolute right-0 bottom-0 w-[12px] h-[12px] rounded-full bg-[#d13438]" />
      </span>
      <div className="ml-[14px] w-[42px] flex flex-col items-center text-[14px] leading-[21px]"><span>ENG</span><span>US</span></div>
      <span className="ml-[16px] w-[20px] text-[#888888]"><Stroke size={20} sw={1.200}><path d="M2 8a11 11 0 0 1 16 0M5 11a7 7 0 0 1 10 0" /><path d="M8 14a3 3 0 0 1 4 0" stroke="#222222" /><circle cx="10" cy="16.500" r="0.800" fill="#222222" stroke="#222222" /></Stroke></span>
      <span className="ml-[8px] w-[20px] text-[#222222]"><Stroke size={20} sw={1.200}><path d="M2 7.500h3L9.500 3v14L5 12.500H2zM13 8l5 5M18 8l-5 5" /></Stroke></span>
      <span className="ml-[12px] w-[20px] text-[#222222]"><Stroke size={20} sw={1.300}><rect x="1" y="5" width="16" height="10" rx="2" /><path d="M19 8.500v3" /><rect x="3" y="7" width="3" height="6" fill="#222222" stroke="none" /></Stroke></span>
      <div className="ml-[16px] w-[82px] flex flex-col items-end text-[14px] leading-[21px]"><span>12:03</span><span>16/03/2024</span></div>
      <svg className="ml-[10px]" width="20" height="24" viewBox="0 0 20 24" fill="#a8480c"><path d="M10 1c3.500 0 5.500 3 5.500 7 0 4 1.500 7 3 9.500H1.500C3 15 4.500 12 4.500 8c0-4 2-7 5.500-7z" /><circle cx="10" cy="20.500" r="2.500" /></svg>
      <span className="relative ml-[20px] mr-[24px] w-[30px] h-[34px]">
        <svg width="30" height="30" viewBox="0 0 30 30">
          <defs><linearGradient id="copilotFill" x1="0" y1="0" x2="1" y2="1"><stop offset="0" stopColor="#29b5e8" /><stop offset="0.500" stopColor="#8c6df0" /><stop offset="1" stopColor="#f06aa8" /></linearGradient></defs>
          <path d="M9 0h12c3 0 5 2 6 5l3 13c1 5-2 9-6 9H9c-5 0-8-4-7-9L6 5c1-3 2-5 3-5z" fill="url(#copilotFill)" />
          <path d="M10 12h10l-3 12H8z" fill="#f7e9f2" />
        </svg>
        <span className="absolute right-0 bottom-0 h-[12px] px-[2px] bg-[#f4c430] text-[#222222] text-[9px] font-bold leading-[12px] rounded-[2px]">PRE</span>
      </span>
    </div>
  </div>
);

const SwingInput: React.FC<{ value: string }> = ({ value }) => (
  <div className="mt-[4px] w-[388px] h-[23px] shrink-0 bg-white border border-[#7a8a99] pl-[2px] leading-[25px] text-[14.3px] text-[#333333]">{value}</div>
);

const SwingButton: React.FC<{ label: string }> = ({ label }) => (
  <div className="ml-[14px] w-[91px] h-[32px] shrink-0 border border-[#8fa4bb] bg-gradient-to-b from-[#fbfcfd] via-[#e3ebf3] to-[#c2d3e6] flex items-center justify-center pt-[3px] font-bold text-[14.6px] text-[#333333]">{label}</div>
);

const SwingCombo: React.FC<{ value: string; focused?: boolean }> = ({ value, focused }) => (
  <div className="w-[390px] h-[31px] shrink-0 flex border border-[#7a8a99]">
    <div className={`flex-1 flex items-center pl-[2px] pt-[2px] border border-[#e6ebf2] font-bold text-[15px] text-[#333333] ${focused ? 'bg-[#a3b7ce]' : 'bg-[#eeeeee]'}`}>{value}</div>
    <div className="w-[24px] border-l border-[#9fb1c4] bg-gradient-to-b from-[#f6f8fb] to-[#c3d4e6] flex items-center justify-center">
      <span className="block w-0 h-0 border-l-[7px] border-r-[7px] border-t-[8px] border-l-transparent border-r-transparent border-t-[#333333]" />
    </div>
  </div>
);

const FormLabel: React.FC<{ tall?: boolean; children: React.ReactNode }> = ({ tall, children }) => (
  <div className={`w-[114px] shrink-0 font-bold text-[14.7px] text-[#2e3336] whitespace-nowrap ${tall ? 'leading-[36px]' : 'leading-[33px]'}`}>{children}</div>
);

const DialogWindow = () => (
  <div className="absolute z-20 left-[594px] top-[86px] w-[732px] h-[840px] rounded-[8px] overflow-hidden bg-white flex flex-col shadow-[0_0_24px_rgba(0,0,0,0.45)] font-['Liberation_Sans',Arial,sans-serif]">
    <div className="h-[37px] shrink-0 bg-[#f9f0ea] flex items-center pb-[1px] text-[#111111]">
      <span className="ml-[9px] w-[19px] h-[19px] rounded-[2px] border border-[#8da0b6] bg-gradient-to-b from-[#edf2f8] to-[#c7d4e3] flex items-center justify-center">
        <FaJava size={16} color="#b3722d" />
      </span>
      <span className="ml-[550px] w-[14px] h-[1px] bg-[#111111]" />
      <span className="ml-[45px] w-[12px] h-[12px] border border-[#111111] rounded-[1px]" />
      <span className="ml-[45px]"><Stroke size={16} sw={1.100}><path d="M3 3l14 14M17 3L3 17" /></Stroke></span>
    </div>
    <div className="flex-1 pl-[62px] flex flex-col">
      <div className="h-[113px] shrink-0 w-[618px] pt-[64px] text-center text-[25px] leading-[30px] font-bold text-[#2e3336]">Data Mahasiswa</div>
      <div className="h-[39px] shrink-0 flex items-start">
        <FormLabel tall>NIM</FormLabel>
        <SwingInput value="1234567" />
        <SwingButton label="Add" />
      </div>
      <div className="h-[39px] shrink-0 flex items-start">
        <FormLabel tall>Nama</FormLabel>
        <SwingInput value="Angelina Veronika" />
        <SwingButton label="Cancel" />
      </div>
      <div className="h-[50px] shrink-0 flex items-start">
        <FormLabel>Jenis Kelamin</FormLabel>
        <SwingCombo value="Perempuan" />
      </div>
      <div className="h-[37px] shrink-0 flex items-start">
        <FormLabel>Program Studi</FormLabel>
        <SwingCombo value="Ilmu Komputer" focused />
      </div>
      <div className="w-[606px] h-[461px] border border-[#7a8a99] bg-[#ececec] text-[14.5px]">
        <div className="grid grid-cols-[122px_121px_121px_120px_120px] h-[25px]">
          {tableColumns.map(col => (
            <div key={col} className="border-r border-b border-[#7a8a99] bg-gradient-to-b from-[#f4f4f4] to-[#ebebeb] flex items-center justify-center pt-[3px] text-[#333333]">{col}</div>
          ))}
        </div>
        {students.map(row => (
          <div key={row[0]} className="grid grid-cols-[122px_121px_121px_120px_120px] h-[20px] bg-white">
            {row.map((cell, i) => (
              <div key={i} className="border-r border-b border-[#7a8a99] pl-[1px] leading-[21px] text-[#222222] whitespace-nowrap overflow-hidden">{cell}</div>
            ))}
          </div>
        ))}
      </div>
    </div>
  </div>
);

export default function App() {
  return (
    <div className="relative w-[1920px] h-[1080px] overflow-hidden flex flex-col bg-[#1e1f22] font-['Inter',sans-serif]">
      <TitleBar />
      <div className="flex flex-1 min-h-0">
        <LeftStripe />
        <div className="flex-1 min-w-0 flex flex-col">
          <div className="flex flex-1 min-h-0">
            <ProjectPanel />
            <Editor />
          </div>
          <RunPanel />
        </div>
        <div className="w-[50px] shrink-0 bg-[#2b2d30] flex justify-center pt-[14px] text-[#ced0d6]">
          <span className="relative block w-[24px] h-[24px]">
            <Stroke size={24} sw={1.400}><path d="M10 2c3 0 5 2.500 5 6 0 3.500 1 5.500 2.500 7.500h-15C4 13.500 5 11.500 5 8c0-3.500 2-6 5-6zM8.500 18.500h3" /></Stroke>
            <span className="absolute -top-[1px] right-0 w-[9px] h-[9px] rounded-full bg-[#db5c5c]" />
          </span>
        </div>
      </div>
      <StatusBar />
      <Taskbar />
      <DialogWindow />
    </div>
  );
}
